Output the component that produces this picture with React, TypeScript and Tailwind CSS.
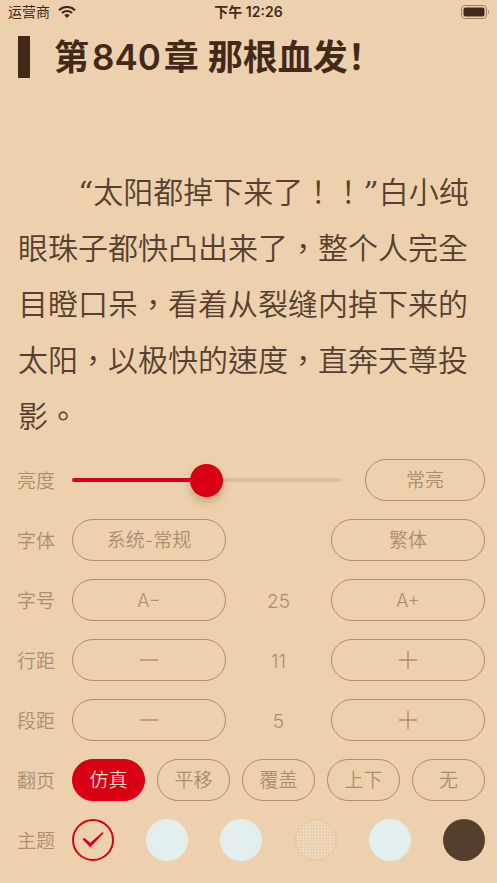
import { useState } from "react";
import type { ReactNode } from "react";

const PAGE_MODES = ["仿真", "平移", "覆盖", "上下", "无"];

const THEMES = [
  { name: "羊皮纸", swatch: "bg-[#edd1ae]" },
  { name: "浅蓝", swatch: "bg-[#e3efef]" },
  { name: "薄荷", swatch: "bg-[#e3efef]" },
  {
    name: "纹理",
    swatch:
      "border border-dotted border-[#d3b693] bg-[#edd1ae] bg-[radial-gradient(circle,#e3efef_1px,transparent_1px)] bg-[size:3px_3px]",
  },
  { name: "冰白", swatch: "bg-[#e3efef]" },
  { name: "夜间", swatch: "bg-[#563f2e]" },
];

function StatusBar() {
  return (
    <header className="grid grid-cols-3 items-center px-2 pt-0.5 text-sm leading-5 text-[#42291a]">
      <div className="flex items-center gap-2">
        <span>运营商</span>
        <svg className="h-3 w-[18px]" viewBox="0 0 18 12" fill="none" aria-label="Wi-Fi">
          <path d="M1 4.2a11.6 11.6 0 0 1 16 0" stroke="currentColor" strokeWidth="2.2" />
          <path d="M3.9 7.1a7.4 7.4 0 0 1 10.2 0" stroke="currentColor" strokeWidth="2.1" />
          <path d="M9 12 6.3 9.3a3.9 3.9 0 0 1 5.4 0z" fill="currentColor" />
        </svg>
      </div>
      <time className="text-center font-semibold">下午 12:26</time>
      <svg className="h-[14px] w-[29px] justify-self-end" viewBox="0 0 29 14" aria-label="电池">
        <rect x="1.5" y="0.5" width="25" height="13" rx="3.5" fill="none" stroke="#9b7f63" />
        <rect x="3.5" y="2.5" width="21" height="9" rx="2" fill="#42291a" />
        <path d="M28 5c1.2.6 1.2 3.4 0 4z" fill="#9b7f63" />
      </svg>
    </header>
  );
}

function Row({ label, htmlFor, children }: { label: string; htmlFor?: string; children: ReactNode }) {
  return (
    <div className="flex items-center">
      {htmlFor ? (
        <label htmlFor={htmlFor} className="w-[55px] shrink-0 pt-1">
          {label}
        </label>
      ) : (
        <span className="w-[55px] shrink-0 pt-1">{label}</span>
      )}
      <div className="flex min-w-0 flex-1 items-center">{children}</div>
    </div>
  );
}

function Pill({
  children,
  active = false,
  className = "flex-1",
  label,
  onClick,
}: {
  children: ReactNode;
  active?: boolean;
  className?: string;
  label?: string;
  onClick?: () => void;
}) {
  const tone = active ? "border-[#d90013] bg-[#d90013] text-[#f6dfc3]" : "border-[#ac8d6e]";
  return (
    <button
      type="button"
      aria-label={label}
      onClick={onClick}
      className={`flex h-[42px] items-center justify-center rounded-full border pt-0.5 ${tone} ${className}`}
    >
      {children}
    </button>
  );
}

function Minus() {
  return (
    <svg className="size-[18px]" viewBox="0 0 18 18" stroke="currentColor" strokeWidth="1.4">
      <path d="M0 8h18" />
    </svg>
  );
}

function Plus() {
  return (
    <svg className="size-[18px] overflow-visible" viewBox="0 0 18 18" stroke="currentColor" strokeWidth="1.4">
      <path d="M0 8h18M9-1v18" />
    </svg>
  );
}

function Stepper({
  label,
  value,
  minus,
  plus,
  onChange,
}: {
  label: string;
  value: number;
  minus: ReactNode;
  plus: ReactNode;
  onChange: (value: number) => void;
}) {
  return (
    <Row label={label}>
      <Pill label={`${label}减小`} onClick={() => onChange(value - 1)}>
        {minus}
      </Pill>
      <output className="w-[105px] pt-1 text-center">{value}</output>
      <Pill label={`${label}增大`} onClick={() => onChange(value + 1)}>
        {plus}
      </Pill>
    </Row>
  );
}

export default function App() {
  const [brightness, setBrightness] = useState(50);
  const [fontSize, setFontSize] = useState(25);
  const [lineGap, setLineGap] = useState(11);
  const [paragraphGap, setParagraphGap] = useState(5);
  const [mode, setMode] = useState("仿真");
  const [theme, setTheme] = useState("羊皮纸");

  return (
    <div
      lang="zh-CN"
      className="min-h-screen bg-[#edd1ae] font-['Inter','Noto_Sans_CJK_SC',sans-serif] text-[#42291a]"
    >
      <StatusBar />

      <article className="px-[18px] pt-3.5">
        <h1 className="flex items-center gap-6 text-[35px] leading-[42px] font-semibold">
          <span className="h-[42px] w-3 bg-[#42291a]" />
          <span>
            第<span className="mx-[3px]">840</span>章 那根血发！
          </span>
        </h1>
        <p
          lang="zh-TW"
          className="mt-[87px] indent-[60px] font-['DejaVu_Serif','Noto_Sans_CJK_TC',sans-serif] text-[30px] leading-[56px] font-[350] text-[#563f2e]"
        >
          “太阳都掉下来了！！”白小纯眼珠子都快凸出来了，整个人完全目瞪口呆，看着从裂缝内掉下来的太阳，以极快的速度，直奔天尊投影。
        </p>
      </article>

      <section className="flex flex-col gap-[18px] pt-3.5 pr-3 pb-[22px] pl-[17px] text-[19px] font-[350] text-[#ac8d6e]">
        <Row label="亮度" htmlFor="brightness">
          <input
            id="brightness"
            type="range"
            min={0}
            max={100}
            value={brightness}
            onChange={(event) => setBrightness(Number(event.target.value))}
            style={{
              backgroundImage: `linear-gradient(to right, #d90013 ${brightness}%, #dabd99 ${brightness}%)`,
            }}
            className="mr-6 h-1 min-w-0 flex-1 appearance-none rounded-full [&::-webkit-slider-thumb]:size-[33px] [&::-webkit-slider-thumb]:appearance-none [&::-webkit-slider-thumb]:rounded-full [&::-webkit-slider-thumb]:bg-[#d90013] [&::-webkit-slider-thumb]:shadow-[0_5px_8px_rgba(100,70,30,0.3)]"
          />
          <Pill className="w-[120px]">常亮</Pill>
        </Row>

        <Row label="字体">
          <Pill>系统-常规</Pill>
          <span className="w-[105px]" />
          <Pill>繁体</Pill>
        </Row>

        <Stepper
          label="字号"
          value={fontSize}
          minus={<span className="text-lg">A−</span>}
          plus={<span className="text-lg">A+</span>}
          onChange={setFontSize}
        />
        <Stepper label="行距" value={lineGap} minus={<Minus />} plus={<Plus />} onChange={setLineGap} />
        <Stepper
          label="段距"
          value={paragraphGap}
          minus={<Minus />}
          plus={<Plus />}
          onChange={setParagraphGap}
        />

        <Row label="翻页">
          <div className="flex flex-1 gap-3">
            {PAGE_MODES.map((name) => (
              <Pill key={name} active={name === mode} onClick={() => setMode(name)}>
                {name}
              </Pill>
            ))}
          </div>
        </Row>

        <Row label="主题">
          <div className="flex flex-1 justify-between">
            {THEMES.map(({ name, swatch }) => (
              <label key={name} className="grid size-[42px] place-items-center">
                <input
                  type="radio"
                  name="theme"
                  aria-label={name}
                  checked={name === theme}
                  onChange={() => setTheme(name)}
                  className={`col-start-1 row-start-1 size-[42px] appearance-none rounded-full checked:border-2 checked:border-solid checked:border-[#d90013] ${swatch}`}
                />
                {name === theme && (
                  <svg
                    className="pointer-events-none col-start-1 row-start-1 size-[42px]"
                    viewBox="0 0 42 42"
                    fill="#d90013"
                    aria-hidden="true"
                  >
                    <path d="M10.6 20.6l1.5-1.8 6.2 4.9L30.6 13l1 1.2L18.2 28.2z" />
                  </svg>
                )}
              </label>
            ))}
          </div>
        </Row>
      </section>
    </div>
  );
}
